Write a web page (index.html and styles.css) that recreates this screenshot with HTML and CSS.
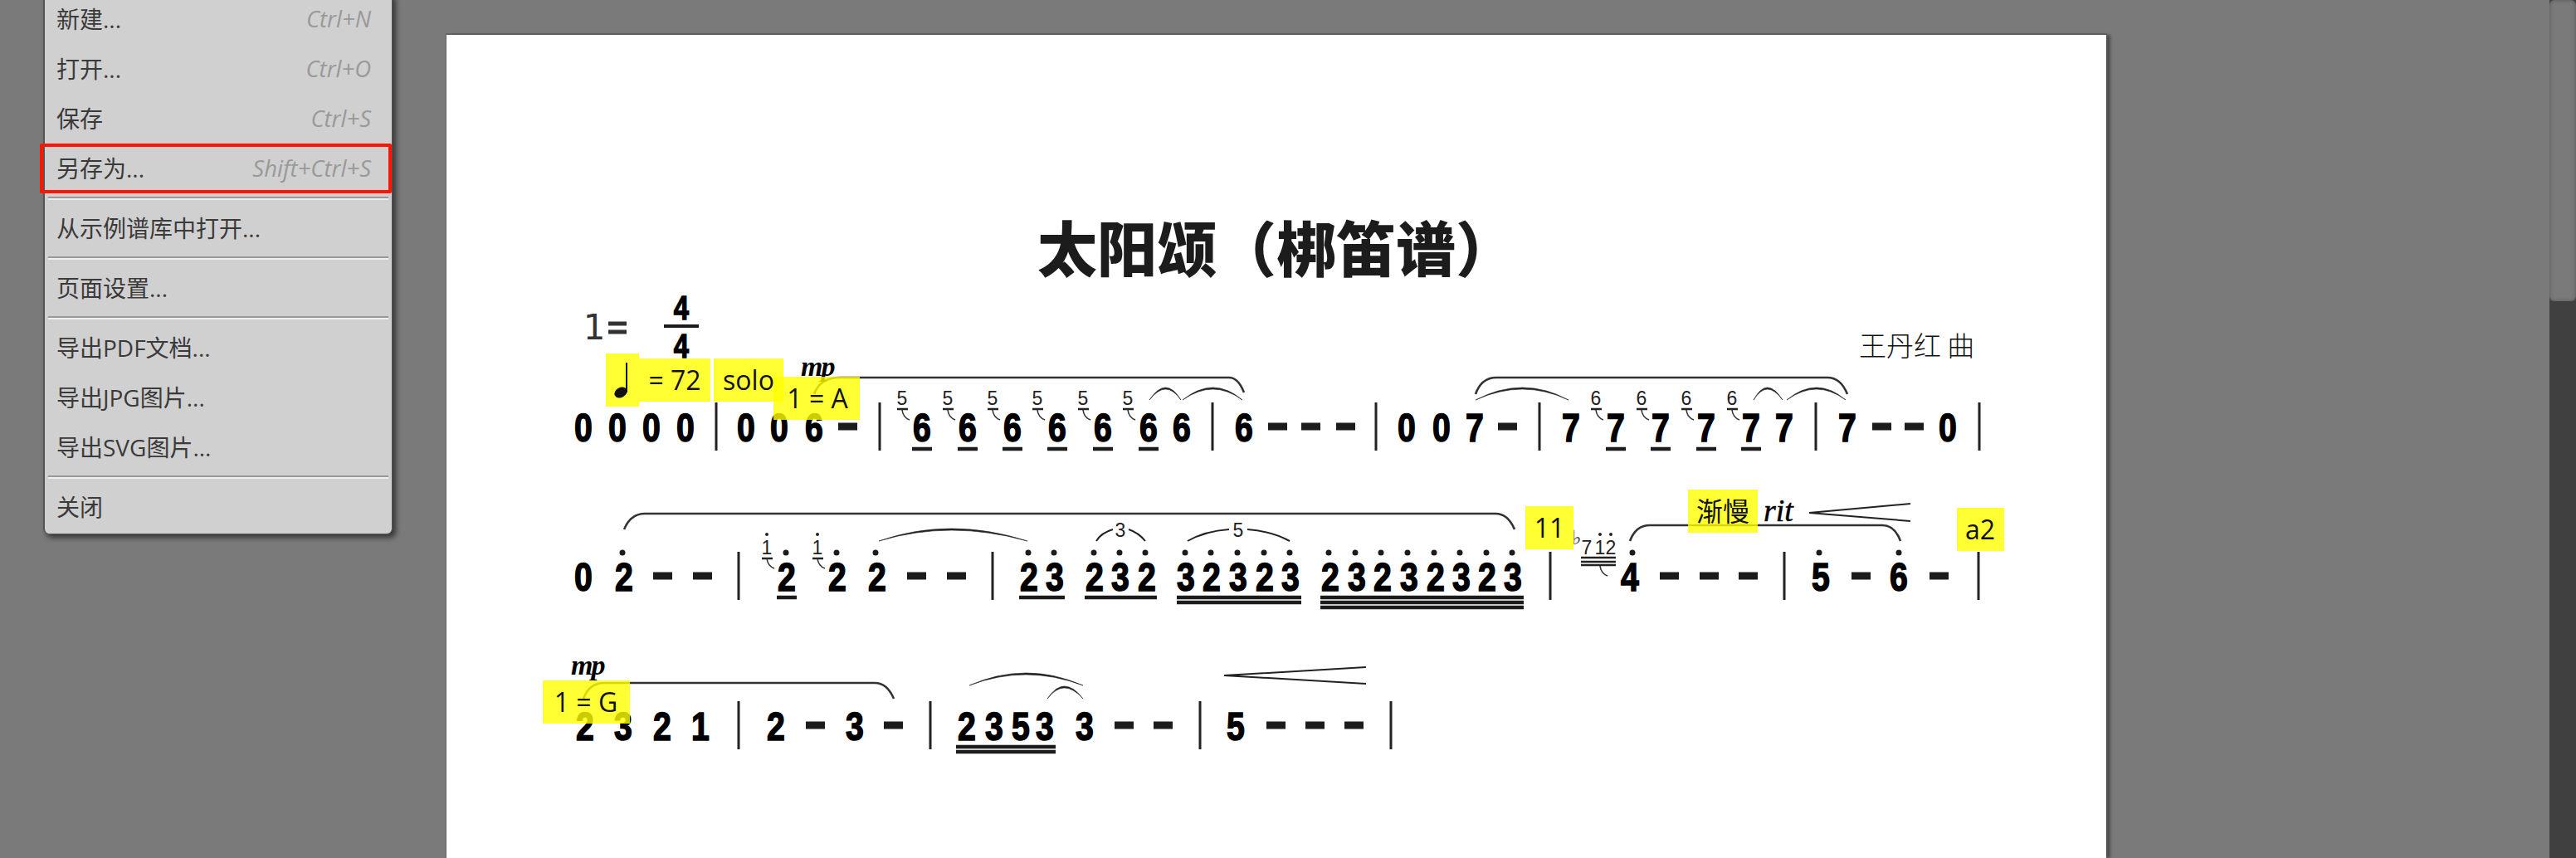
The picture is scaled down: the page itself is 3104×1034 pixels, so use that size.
FILE: index.html
```html
<!DOCTYPE html>
<html lang="zh-CN">
<head>
    <meta charset="UTF-8">
    <title>太阳颂（梆笛谱）</title>
    <link rel="stylesheet" href="styles.css">
</head>
<body>
    <div class="workspace">
        <main class="sheet">
            <!-- viewBox matches window coordinates, so the score can be read off the screen -->
            <svg class="score" viewBox="538 42 2000 992" xmlns="http://www.w3.org/2000/svg">
                <defs>
                    <path id="hook" d="M0 0q1 9 9 12"/>
                </defs>

                <text class="title" x="1250" y="327">太阳颂（梆笛谱）</text>
                <text class="composer" x="2240" y="429">王丹红 曲</text>

                <!-- key and time signature -->
                <text class="key" x="716" y="409">1</text>
                <path class="key-eq" d="M733 390h22M733 400h22"/>
                <!-- .time and .note are squeezed to 80% wide, so their x values are screen x * 1.25 -->
                <text class="time" x="1026 1026" y="385 431">44</text>
                <path class="rule" d="M800 393h42"/>

                <!-- line 1 -->
                <text class="note" x="878.75 930 981.25 1032.5 1123.75 1173.75 1226.25 1388.75 1457.5 1525 1592.5 1661.25 1730 1780 1873.75 2118.75 2171.25 2221.25 2366.25 2433.75 2501.25 2570 2637.5 2687.5 2782.5 2933.75" y="532">00000066666666600777777770</text>
                <path class="bars" d="M863 485v58M1060 485v58M1461 485v58M1658 485v58M1855 485v58M2188 485v58M2385 485v58"/>
                <path class="dashes" d="M1010 514h23M1528 514h23M1568 514h23M1610 514h23M1805 514h23M2256 514h23M2295 514h23"/>
                <path class="beams" d="M1099 541h24M1154 541h24M1208 541h24M1262 541h24M1317 541h24M1372 541h24M1935 541h24M1989 541h24M2044 541h24M2098 541h24"/>
                <text class="grace" x="1087 1142 1196 1250 1305 1359" y="488">555555</text>
                <text class="grace" x="1923 1978 2032 2087" y="488">6666</text>
                <path class="grace-bar" d="M1081 493h13M1136 493h13M1190 493h13M1244 493h13M1299 493h13M1353 493h13M1917 493h13M1972 493h13M2026 493h13M2081 493h13"/>
                <use class="hook" href="#hook" x="1087" y="494"/><use class="hook" href="#hook" x="1142" y="494"/>
                <use class="hook" href="#hook" x="1196" y="494"/><use class="hook" href="#hook" x="1250" y="494"/>
                <use class="hook" href="#hook" x="1305" y="494"/><use class="hook" href="#hook" x="1359" y="494"/>
                <use class="hook" href="#hook" x="1923" y="494"/><use class="hook" href="#hook" x="1978" y="494"/>
                <use class="hook" href="#hook" x="2032" y="494"/><use class="hook" href="#hook" x="2087" y="494"/>
                <path class="bracket" d="M981 475Q988 455 1012 455H1481Q1492 455 1499 473"/>
                <path class="bracket" d="M1778 475Q1785 455 1803 455H2202Q2218 455 2226 475"/>
                <path class="slur" d="M1385 482Q1405 452 1423 482Q1405 456 1385 482Z"/>
                <path class="slur" d="M1425 482Q1462 452 1497 482Q1462 456 1425 482Z"/>
                <path class="slur" d="M1778 482Q1835 452 1890 482Q1835 456 1778 482Z"/>
                <path class="slur" d="M2113 482Q2129 452 2148 482Q2129 456 2113 482Z"/>
                <path class="slur" d="M2153 482Q2189 452 2224 482Q2189 456 2153 482Z"/>
                <text class="dynamic" x="965" y="453">mp</text>

                <!-- line 2 -->
                <text class="note" x="878.75 940 1185 1261.25 1321.25 1550 1588.75 1648.75 1687.5 1727.5 1786.25 1825 1865 1905 1943.75 2003.75 2043.75 2082.5 2122.5 2162.5 2201.25 2240 2278.75 2455 2742.5 2860" y="712">02222232323232323232323456</text>
                <path class="dots" d="M750 666h0M947 666h0M1008 666h0M1055 666h0M1239 666h0M1270 666h0M1318 666h0M1349 666h0M1380 666h0M1428 666h0M1459 666h0M1491 666h0M1523 666h0M1554 666h0M1601 666h0M1633 666h0M1664 666h0M1696 666h0M1728 666h0M1759 666h0M1791 666h0M1822 666h0M1967 666h0M2192 666h0M2288 666h0"/>
                <path class="bars" d="M890 665v58M1196 665v58M1868 665v58M2150 665v58M2384 665v58"/>
                <path class="dashes" d="M787 694h23M835 694h23M1093 694h23M1141 694h23M2000 694h23M2048 694h23M2095 694h23M2231 694h23M2325 694h23"/>
                <path class="beams" d="M936 720h24M1228 720h55M1307 720h87M1418 720h150M1418 726h150M1591 720h245M1591 726h245M1591 732h245"/>
                <text class="grace" x="924 985" y="668">11</text>
                <path class="tiny-dots" d="M924 644h0M985 644h0M1928 644h0M1941 644h0"/>
                <path class="grace-bar" d="M918 673h13M979 673h13M1905 672h42M1905 677h42M1905 681h42"/>
                <use class="hook" href="#hook" x="924" y="673"/><use class="hook" href="#hook" x="985" y="673"/>
                <use class="hook" href="#hook" x="1928" y="682"/>
                <text class="grace" x="1912 1928 1941" y="668">712</text>
                <text class="flat" x="1900" y="656">♭</text>
                <path class="bracket" d="M752 638Q760 619 777 619H1802Q1817 619 1825 638"/>
                <path class="bracket" d="M1964 652Q1971 633 1988 633H2268Q2283 633 2290 652"/>
                <path class="slur" d="M1059 652Q1145 622 1238 652Q1145 626 1059 652Z"/>
                <path class="thin" d="M1321 652Q1327 642 1341 638M1360 638Q1372 642 1380 652M1431 652Q1452 640 1481 638M1503 638Q1532 640 1554 652"/>
                <text class="grace" x="1350 1492" y="647">35</text>
                <path class="thin" d="M2180 618L2302 607M2180 618L2302 628"/>
                <text class="rit" x="2125" y="628">rit</text>

                <!-- line 3 -->
                <text class="note" x="881.25 938.75 997.5 1055 1168.75 1287.5 1456.25 1497.5 1537.5 1573.75 1633.75 1861.25" y="892">232123235335</text>
                <path class="bars" d="M890 845v58M1121 845v58M1446 845v58M1676 845v58"/>
                <path class="dashes" d="M971 874h23M1065 874h23M1343 874h23M1390 874h23M1526 874h23M1573 874h23M1620 874h23"/>
                <path class="beams" d="M1152 900h120M1152 906h120"/>
                <path class="bracket" d="M703 842Q710 823 728 823H1054Q1069 823 1077 842"/>
                <path class="slur" d="M1168 826Q1236 796 1305 826Q1236 800 1168 826Z"/>
                <path class="slur" d="M1262 842Q1282 812 1305 842Q1282 816 1262 842Z"/>
                <path class="thin" d="M1475 814L1646 804M1475 814L1646 824"/>
                <text class="dynamic" x="688" y="813">mp</text>

                <!-- yellow rehearsal labels sit over the notes -->
                <rect class="label" x="730" y="426" width="40" height="64"/>
                <path class="crotchet" d="M755 437v36"/>
                <ellipse class="crotchet-head" cx="748" cy="473" rx="8" ry="6" transform="rotate(-28 748 473)"/>
                <rect class="label" x="770" y="432" width="86" height="52"/>
                <text class="label-text" x="813" y="470">= 72</text>
                <rect class="label" x="860" y="432" width="84" height="52"/>
                <text class="label-text" x="902" y="470">solo</text>
                <rect class="label" x="932" y="454" width="104" height="52"/>
                <text class="label-text" x="985" y="492">1 = A</text>
                <rect class="label" x="1838" y="610" width="58" height="52"/>
                <text class="label-text" x="1867" y="648">11</text>
                <rect class="label" x="2034" y="590" width="84" height="52"/>
                <text class="label-text" x="2076" y="628">渐慢</text>
                <rect class="label" x="2358" y="612" width="57" height="52"/>
                <text class="label-text" x="2386" y="650">a2</text>
                <rect class="label" x="654" y="820" width="105" height="52"/>
                <text class="label-text" x="706" y="858">1 = G</text>
            </svg>
        </main>
        <div class="scrollbar"><div class="scroll-thumb"></div></div>
    </div>

    <nav class="menu">
        <div class="menu-item"><span>新建...</span><span class="shortcut">Ctrl+N</span></div>
        <div class="menu-item"><span>打开...</span><span class="shortcut">Ctrl+O</span></div>
        <div class="menu-item"><span>保存</span><span class="shortcut">Ctrl+S</span></div>
        <div class="menu-item marked"><span>另存为...</span><span class="shortcut">Shift+Ctrl+S</span></div>
        <div class="menu-sep"></div>
        <div class="menu-item"><span>从示例谱库中打开...</span></div>
        <div class="menu-sep"></div>
        <div class="menu-item"><span>页面设置...</span></div>
        <div class="menu-sep"></div>
        <div class="menu-item"><span>导出PDF文档...</span></div>
        <div class="menu-item"><span>导出JPG图片...</span></div>
        <div class="menu-item"><span>导出SVG图片...</span></div>
        <div class="menu-sep"></div>
        <div class="menu-item"><span>关闭</span></div>
    </nav>
</body>
</html>
```

FILE: styles.css
```css
html, body {
    margin: 0;
    height: 100%;
    overflow: hidden;
    background-color: #7a7a7a;
}
.workspace {
    display: flex;
    height: 100%;
}

/* sheet of paper */
.sheet {
    flex: none;
    width: 2000px;
    height: 992px;
    margin: 42px 534px 0 538px;
    background-color: #fff;
    box-shadow: 5px 0 3px rgba(0, 0, 0, 0.35), 0 -1px 0 1px #666;
}
.score {
    display: block;
    width: 2000px;
    height: 992px;
}
.title {
    font-family: "Noto Sans CJK SC", sans-serif;
    font-size: 72px;
    font-weight: 900;
    fill: #1c1c1c;
}
.composer {
    font-family: "Noto Sans CJK SC", sans-serif;
    font-size: 33px;
    font-weight: 300;
    fill: #111;
}
.key {
    font-family: "DejaVu Sans", sans-serif;
    font-size: 42px;
    text-anchor: middle;
    fill: #333;
}
.key-eq {
    fill: none;
    stroke: #333;
    stroke-width: 5px;
}
.time {
    font-family: "Liberation Sans", sans-serif;
    font-size: 41px;
    font-weight: bold;
    text-anchor: middle;
    transform: scale(0.8, 1);
    stroke: #000;
    stroke-width: 1.4px;
}
.rule {
    stroke: #1c1c1c;
    stroke-width: 4px;
}
.note {
    font-family: "Liberation Sans", sans-serif;
    font-size: 49px;
    font-weight: bold;
    text-anchor: middle;
    transform: scale(0.8, 1);
    stroke: #000;
    stroke-width: 1.6px;
}
.grace {
    font-family: "Liberation Sans", sans-serif;
    font-size: 23px;
    text-anchor: middle;
    fill: #222;
}
.flat {
    font-family: "DejaVu Sans", sans-serif;
    font-size: 24px;
    text-anchor: middle;
    fill: #444;
}
.bars {
    stroke: #222;
    stroke-width: 3px;
}
.dashes {
    stroke: #1c1c1c;
    stroke-width: 9px;
}
.beams {
    stroke: #1c1c1c;
    stroke-width: 4.5px;
}
.dots {
    stroke: #1c1c1c;
    stroke-width: 7px;
    stroke-linecap: round;
}
.tiny-dots {
    stroke: #222;
    stroke-width: 4px;
    stroke-linecap: round;
}
.grace-bar {
    stroke: #222;
    stroke-width: 2.5px;
}
.hook {
    fill: none;
    stroke: #333;
    stroke-width: 1.6px;
}
.bracket {
    fill: none;
    stroke: #333;
    stroke-width: 2.6px;
}
.slur {
    fill: #222;
    stroke: #222;
    stroke-width: 0.6px;
}
.thin {
    fill: none;
    stroke: #222;
    stroke-width: 2px;
}
.dynamic {
    font-family: "Liberation Serif", serif;
    font-size: 34px;
    font-style: italic;
    font-weight: bold;
    letter-spacing: -2px;
}
.rit {
    font-family: "Liberation Serif", serif;
    font-size: 38px;
    font-style: italic;
    stroke: #000;
    stroke-width: 0.5px;
}
.label {
    fill: rgba(255, 255, 0, 0.8);
}
.label-text {
    font-family: "Open Sans", "Noto Sans CJK SC", sans-serif;
    font-size: 32px;
    text-anchor: middle;
    fill: #111;
}
.crotchet {
    stroke: #111;
    stroke-width: 2px;
}
.crotchet-head {
    fill: #111;
}

/* scrollbar on the right */
.scrollbar {
    flex: none;
    width: 32px;
    height: 100%;
    background-color: #404040;
}
.scroll-thumb {
    height: 363px;
    background-color: #7a7a7a;
    border-radius: 6px;
    box-shadow: inset 0 0 4px #555;
}

/* file menu, cut off by the top of the window */
.menu {
    position: absolute;
    top: -7px;
    left: 52px;
    box-sizing: border-box;
    width: 421px;
    height: 651px;
    background-color: #d0d0d0;
    border: 2px solid #555;
    border-top: none;
    border-right-width: 1px;
    border-bottom-width: 1px;
    border-radius: 0 0 7px 7px;
    box-shadow: 4px 4px 6px rgba(0, 0, 0, 0.55);
    font-family: "Open Sans", "Noto Sans CJK SC", sans-serif;
    font-size: 28px;
    color: #3a3a3a;
}
.menu-item {
    position: relative;
    display: flex;
    justify-content: space-between;
    align-items: center;
    box-sizing: border-box;
    height: 60px;
    padding: 0 25px 2px 14px;
}
.shortcut {
    font-size: 27.5px;
    font-style: italic;
    color: #999;
}
.marked::after {
    content: "";
    position: absolute;
    top: 0;
    left: -6px;
    right: 0;
    bottom: 0;
    border: 4px solid #ff1500;
    border-radius: 2px;
}
.menu-sep {
    height: 4px;
    margin: 4px;
    background: linear-gradient(#999 50%, #eee 50%);
}
```
